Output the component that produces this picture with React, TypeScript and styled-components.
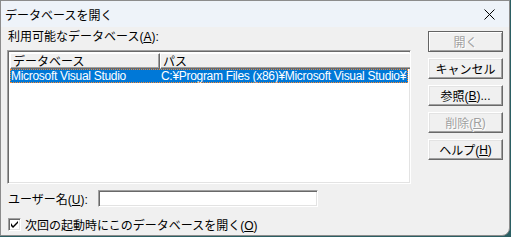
import styled, { createGlobalStyle } from "styled-components";

const GlobalStyle = createGlobalStyle`
    html, body {
        margin: 0;
        padding: 0;
        background: #2b5f63;
    }
    body {
        font-family: "Liberation Sans", "Noto Sans CJK JP", sans-serif;
        font-size: 12px;
        color: #000;
    }
`;

const Window = styled.div`
    width: 508px;
    height: 234px;
    background: #f0f0f0;
    border: 1px solid #8c8c8c;
    border-radius: 0 0 8px 0;
    overflow: hidden;
    display: flex;
    flex-direction: column;
`;

const TitleBar = styled.div`
    height: 26px;
    flex: none;
    background: #eef3f9;
    display: flex;
    align-items: center;
    justify-content: space-between;
    padding: 0 14px 0 4px;
    font-family: "Noto Sans CJK JP", sans-serif;
    font-size: 12px;
`;

const Body = styled.div`
    flex: 1;
    display: flex;
    flex-direction: column;
    padding: 3px 0 0 6px;
`;

const Main = styled.div`
    display: flex;
`;

const LeftColumn = styled.div`
    width: 404px;
    display: flex;
    flex-direction: column;
`;

const Label = styled.div`
    line-height: 15px;
    height: 15px;
    padding-left: 1px;
    white-space: nowrap;
`;

const Key = styled.span`
    text-decoration: underline;
`;

const ListBox = styled.div`
    margin-top: 5px;
    height: 134px;
    box-sizing: border-box;
    background: #fff;
    border: 1px solid;
    border-color: #a0a0a0 #fff #fff #a0a0a0;
    box-shadow: inset 1px 1px #696969, inset -1px -1px #e3e3e3;
    padding: 2px;
    overflow: hidden;
`;

const HeaderRow = styled.div`
    display: flex;
    height: 16px;
`;

const HeaderCell = styled.div<{ $width: number }>`
    width: ${(p) => p.$width}px;
    flex: none;
    box-sizing: border-box;
    background: #f0f0f0;
    border: 1px solid;
    border-color: #fff #696969 #696969 #fff;
    box-shadow: inset -1px -1px #a0a0a0;
    padding-left: 2px;
    line-height: 13px;
    white-space: nowrap;
    font-family: "Noto Sans CJK JP", sans-serif;
`;

const Row = styled.div<{ $selected?: boolean }>`
    display: flex;
    height: 14px;
    line-height: 14px;
    background: ${(p) => (p.$selected ? "#0078d7" : "transparent")};
    color: ${(p) => (p.$selected ? "#fff" : "#000")};
    outline: ${(p) => (p.$selected ? "1px dotted #ff8728" : "none")};
    outline-offset: -1px;
    white-space: nowrap;
    overflow: hidden;
    letter-spacing: -0.3px;
`;

const Cell = styled.div<{ $width: number }>`
    width: ${(p) => p.$width}px;
    flex: none;
    padding-left: 1px;
    box-sizing: border-box;
    overflow: hidden;
`;

const ButtonColumn = styled.div`
    margin-left: 17px;
    margin-top: 1px;
    display: flex;
    flex-direction: column;
    gap: 6px;
`;

const Button = styled.div<{ $disabled?: boolean; $default?: boolean }>`
    width: 75px;
    height: 21px;
    box-sizing: border-box;
    display: flex;
    align-items: center;
    justify-content: center;
    background: #f0f0f0;
    border: 1px solid;
    border-color: ${(p) => (p.$default ? "#646464" : "#fff #696969 #696969 #fff")};
    box-shadow: ${(p) =>
        p.$default
            ? "inset 1px 1px #fff, inset -1px -1px #a0a0a0"
            : "inset -1px -1px #a0a0a0, inset 1px 1px #e3e3e3"};
    color: ${(p) => (p.$disabled ? "#a0a0a0" : "#000")};
    text-shadow: ${(p) => (p.$disabled ? "1px 1px #fff" : "none")};
    white-space: nowrap;
`;

const UserRow = styled.div`
    display: flex;
    align-items: center;
    margin-top: 6px;
    padding-left: 1px;
`;

const UserLabel = styled.div`
    width: 90px;
    white-space: nowrap;
`;

const TextInput = styled.div`
    width: 220px;
    height: 17px;
    box-sizing: border-box;
    background: #fff;
    border: 1px solid;
    border-color: #a0a0a0 #fff #fff #a0a0a0;
    box-shadow: inset 1px 1px #696969, inset -1px -1px #e3e3e3;
`;

const CheckRow = styled.div`
    display: flex;
    align-items: center;
    gap: 4px;
    margin-top: 9px;
    padding-left: 1px;
    white-space: nowrap;
`;

const CheckBox = styled.div`
    width: 13px;
    height: 13px;
    box-sizing: border-box;
    background: #fff;
    border: 1px solid;
    border-color: #a0a0a0 #fff #fff #a0a0a0;
    box-shadow: inset 1px 1px #696969, inset -1px -1px #e3e3e3;
    display: flex;
    align-items: center;
    justify-content: center;
`;

const CloseIcon = () => (
    <svg width="11" height="11" viewBox="0 0 11 11">
        <path d="M0.5 0.5 L10.5 10.5 M10.5 0.5 L0.5 10.5" stroke="#000" strokeWidth="1" fill="none" />
    </svg>
);

const CheckMark = () => (
    <svg width="7" height="7" viewBox="0 0 7 7">
        <path d="M0 2 L0 5 L2 7 L7 2 L7 0 L2 5 Z" fill="#000" />
    </svg>
);

export default function App() {
    return (
        <>
            <GlobalStyle />
            <Window>
                <TitleBar>
                    <span>データベースを開く</span>
                    <CloseIcon />
                </TitleBar>
                <Body>
                    <Main>
                        <LeftColumn>
                            <Label>
                                利用可能なデータベース(<Key>A</Key>):
                            </Label>
                            <ListBox>
                                <HeaderRow>
                                    <HeaderCell $width={150}>データベース</HeaderCell>
                                    <HeaderCell $width={254}>パス</HeaderCell>
                                </HeaderRow>
                                <Row $selected>
                                    <Cell $width={150}>Microsoft Visual Studio</Cell>
                                    <Cell $width={250}>C:¥Program Files (x86)¥Microsoft Visual Studio¥</Cell>
                                </Row>
                            </ListBox>
                        </LeftColumn>
                        <ButtonColumn>
                            <Button $default $disabled>開く</Button>
                            <Button>キャンセル</Button>
                            <Button>
                                参照(<Key>B</Key>)...
                            </Button>
                            <Button $disabled>
                                削除(<Key>R</Key>)
                            </Button>
                            <Button>
                                ヘルプ(<Key>H</Key>)
                            </Button>
                        </ButtonColumn>
                    </Main>
                    <UserRow>
                        <UserLabel>
                            ユーザー名(<Key>U</Key>):
                        </UserLabel>
                        <TextInput />
                    </UserRow>
                    <CheckRow>
                        <CheckBox>
                            <CheckMark />
                        </CheckBox>
                        <span>
                            次回の起動時にこのデータベースを開く(<Key>O</Key>)
                        </span>
                    </CheckRow>
                </Body>
            </Window>
        </>
    );
}
